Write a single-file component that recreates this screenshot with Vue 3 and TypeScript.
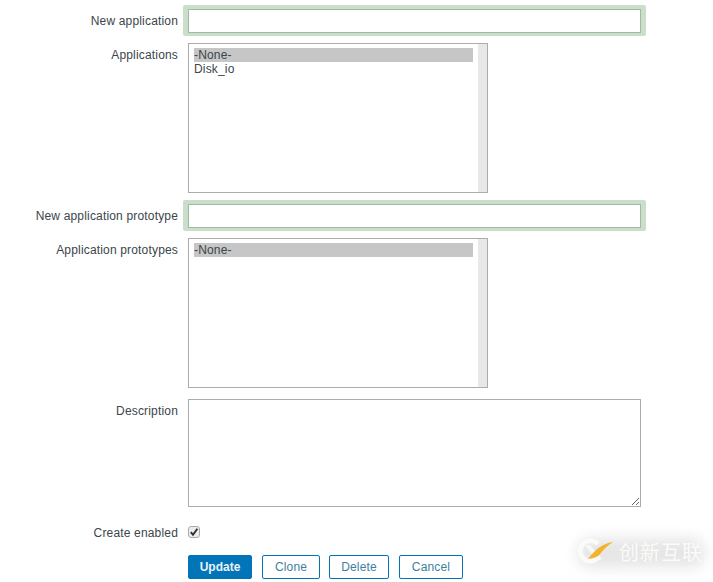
<template>
  <form class="form" @submit.prevent>
    <template v-for="row in rows" :key="row.label">
      <label class="label" :class="'label-' + row.kind">{{ row.label }}</label>
      <div class="field">
        <div v-if="row.kind === 'input'" class="glow">
          <input class="text-input" type="text" />
        </div>
        <div v-else-if="row.kind === 'list'" class="listbox">
          <div class="options">
            <div
              v-for="(opt, idx) in row.options"
              :key="opt"
              class="option"
              :class="{ selected: idx === 0 }"
            >{{ opt }}</div>
          </div>
          <div class="scrollbar"></div>
        </div>
        <textarea v-else-if="row.kind === 'textarea'" class="description"></textarea>
        <span v-else class="check" role="checkbox" aria-checked="true">
          <svg width="12" height="12" viewBox="0 0 12 12">
            <path d="M2.800 6.200 L5 8.800 L9.400 2.800" fill="none" stroke="#2b2f33" stroke-width="1.900" />
          </svg>
        </span>
      </div>
    </template>
    <div class="actions">
      <button class="btn primary" type="submit">Update</button>
      <button v-for="b in buttons" :key="b.text" class="btn" :style="{ width: b.width + 'px', marginRight: b.gap + 'px' }" type="button">{{ b.text }}</button>
    </div>
  </form>

  <div class="watermark" aria-hidden="true">
    <div class="halo"></div>
    <svg class="wm-logo" width="38" height="40" viewBox="0 0 38 40">
      <path d="M22.500 7.500 A12.500 12.500 0 1 0 22.500 24.500 L19.500 21.500 A8 8 0 1 1 19.500 10.500 Z" fill="#fafaf8" />
      <path d="M8 10 L13 10 L25 24 L20 26 Z" fill="#f8f8f6" />
      <path d="M36 7 C28 8 20 12 11 24 C17 23 21 22 24 18 C27 14 31 10 36 7 Z" fill="#f2b32e" />
    </svg>
    <div class="wm-text">
      <span class="wm-cn">创新互联</span>
      <span class="wm-sub">CHUANG XIN HU LIAN</span>
    </div>
  </div>
</template>

<script setup lang="ts">
type Row =
  | { kind: 'input', label: string }
  | { kind: 'list', label: string, options: string[] }
  | { kind: 'textarea', label: string }
  | { kind: 'check', label: string }

const rows: Row[] = [
  { kind: 'input', label: 'New application' },
  { kind: 'list', label: 'Applications', options: ['-None-', 'Disk_io'] },
  { kind: 'input', label: 'New application prototype' },
  { kind: 'list', label: 'Application prototypes', options: ['-None-'] },
  { kind: 'textarea', label: 'Description' },
  { kind: 'check', label: 'Create enabled' },
]

const buttons = [
  { text: 'Clone', width: 58, gap: -1 },
  { text: 'Delete', width: 60, gap: 0 },
  { text: 'Cancel', width: 64, gap: 0 },
]
</script>

<style scoped>
.form {
  display: grid;
  grid-template-columns: 178px 1fr;
  align-content: start;
  column-gap: 10px;
  row-gap: 7px;
  padding-top: 5px;
  width: 713px;
  height: 577px;
  font-family: "Liberation Sans", Arial, sans-serif;
  font-size: 12px;
  letter-spacing: 0.17px;
  color: #3b454b;
}

.label {
  text-align: right;
  color: #3b454b;
  line-height: 14px;
  padding-top: 9px;
}

.label-list {
  padding-top: 5px;
}

.label-textarea {
  padding-top: 9px;
}

.label-check {
  padding-top: 0;
}

.field {
  display: flex;
  align-items: flex-start;
}

.glow {
  box-sizing: border-box;
  width: 463px;
  height: 31px;
  margin-left: -5px;
  padding: 4px 5px 3px;
  background: #c9dfca;
  border-radius: 2px;
}

.text-input {
  display: block;
  box-sizing: border-box;
  width: 453px;
  height: 24px;
  margin: 0;
  padding: 0 5px;
  background: #fff;
  border: 1px solid #a3b8a9;
  outline: none;
}

.listbox {
  box-sizing: border-box;
  display: flex;
  width: 300px;
  height: 150px;
  border: 1px solid #acacac;
  background: #fff;
}

.options {
  flex: 1;
  padding: 4px 5px;
  line-height: 14px;
}

.option {
  white-space: nowrap;
}

.selected {
  background: #c6c6c6;
}

.scrollbar {
  width: 9px;
  background: #e8e8e8;
}

.description {
  display: block;
  box-sizing: border-box;
  width: 453px;
  height: 108px;
  margin: 4px 0 12px;
  padding: 0;
  background: #fff;
  border: 1px solid #acacac;
  border-radius: 0;
  outline: none;
}

.check {
  box-sizing: border-box;
  display: block;
  width: 12px;
  height: 12px;
  background: #ececec;
  border: 1px solid #a9a9a9;
  border-radius: 3px;
}

.check svg {
  display: block;
  margin: -1px;
}

.actions {
  grid-column: 2;
  display: flex;
  gap: 10px;
  margin-top: 8px;
}

.btn {
  box-sizing: border-box;
  height: 24px;
  padding: 0;
  background: #fff;
  border: 1px solid #0275b8;
  border-radius: 2px;
  color: #3e7f9f;
  font: inherit;
  letter-spacing: 0.17px;
}

.primary {
  width: 64px;
  background: #0275b8;
  color: #e8f2f8;
  font-weight: 700;
  letter-spacing: 0;
}

.watermark {
  position: absolute;
  left: 577px;
  top: 535px;
  display: flex;
  align-items: flex-start;
  gap: 4px;
}

.halo {
  position: absolute;
  left: 0;
  top: 3px;
  width: 128px;
  height: 30px;
  background: rgba(150, 150, 150, 0.24);
  border-radius: 14px;
  filter: blur(7px);
}

.wm-logo {
  position: relative;
  display: block;
  filter: blur(0.5px);
}

.wm-text {
  position: relative;
  display: flex;
  flex-direction: column;
  margin-top: 5px;
  font-family: "Noto Sans CJK SC", sans-serif;
  color: #fafaf8;
  filter: blur(0.4px);
}

.wm-cn {
  font-size: 20px;
  line-height: 24px;
  letter-spacing: 1px;
}

.wm-sub {
  font-family: "Liberation Sans", sans-serif;
  font-size: 6px;
  line-height: 8px;
  letter-spacing: 0.8px;
  opacity: 0.7;
}
</style>

<style>
html, body {
  background: #fff;
  overflow: hidden;
}
</style>
